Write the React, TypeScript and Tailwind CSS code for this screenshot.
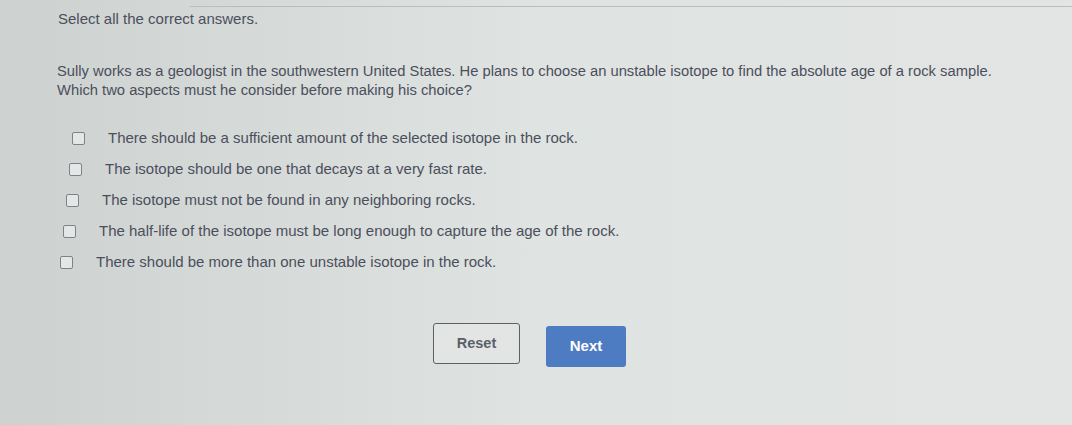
import React, { useState } from "react";

const OPTIONS = [
  "There should be a sufficient amount of the selected isotope in the rock.",
  "The isotope should be one that decays at a very fast rate.",
  "The isotope must not be found in any neighboring rocks.",
  "The half-life of the isotope must be long enough to capture the age of the rock.",
  "There should be more than one unstable isotope in the rock.",
];

// left offsets drift a little, like the photographed screen
const INDENTS = ["pl-[72px]", "pl-[69px]", "pl-[66px]", "pl-[63px]", "pl-[60px]"];

export default function App() {
  const [checked, setChecked] = useState<boolean[]>(OPTIONS.map(() => false));

  const toggle = (i: number) =>
    setChecked((prev) => prev.map((c, j) => (j === i ? !c : c)));

  return (
    <div
      className="w-[1072px] h-[425px] overflow-hidden bg-gradient-to-r from-[#cdd2d1] via-[#dfe3e2] to-[#e2e5e4] text-[#4b4f5b]"
      style={{ fontFamily: '"Liberation Sans", Arial, sans-serif' }}
    >
      {/* top edge line */}
      <div className="ml-[190px] mt-[6px] border-t border-[#b9bdbd]" />

      {/* HEADER */}
      <p className="pl-[58px] pt-[3px] text-[15px] leading-[18px]">
        Select all the correct answers.
      </p>

      {/* QUESTION */}
      <div className="pl-[57px] pt-[34px] text-[14.75px] leading-[19px]">
        <p>
          Sully works as a geologist in the southwestern United States. He plans to choose an
          unstable isotope to find the absolute age of a rock sample.
        </p>
        <p>Which two aspects must he consider before making his choice?</p>
      </div>

      {/* OPTIONS */}
      <div className="mt-[29px] flex flex-col gap-[13px]">
        {OPTIONS.map((opt, i) => (
          <label
            key={opt}
            className={`flex items-center gap-[23px] text-[15px] leading-[18px] cursor-pointer ${INDENTS[i]}`}
          >
            <span
              onClick={() => toggle(i)}
              className={`w-[13px] h-[13px] shrink-0 rounded-[2px] border-[1.5px] border-[#7f8389] ${
                checked[i] ? "bg-[#4f7cc2]" : "bg-[#e4e7e6]"
              }`}
            />
            <span>{opt}</span>
          </label>
        ))}
      </div>

      {/* ACTIONS */}
      <div className="mt-[52px] pl-[433px] flex items-start gap-[26px]">
        <button
          onClick={() => setChecked(OPTIONS.map(() => false))}
          className="w-[87px] h-[41px] rounded-[3px] border-[1.5px] border-[#5d6064] bg-[#e2e5e4] text-[14.5px] font-bold text-[#5a5f6b]"
        >
          Reset
        </button>
        <button className="mt-[3px] w-[80px] h-[41px] rounded-[3px] bg-[#4d7cc3] text-[15px] font-bold text-white">
          Next
        </button>
      </div>
    </div>
  );
}
